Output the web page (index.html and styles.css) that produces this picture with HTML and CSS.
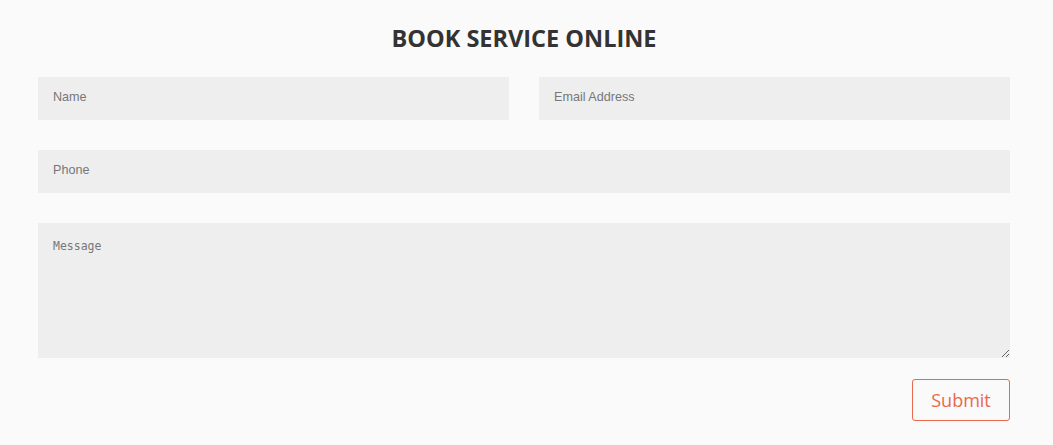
FILE: index.html
```html
<!DOCTYPE html>
<html>
<head>
<meta charset="utf-8">
<link rel="stylesheet" href="styles.css">
</head>
<body>
<section class="booking">
  <h2 class="title">BOOK SERVICE ONLINE</h2>
  <form class="form">
    <div class="row two">
      <input class="field" type="text" placeholder="Name">
      <input class="field" type="email" placeholder="Email Address">
    </div>
    <div class="row">
      <input class="field" type="text" placeholder="Phone">
    </div>
    <div class="row">
      <textarea class="field area" placeholder="Message"></textarea>
    </div>
    <div class="actions">
      <button type="button" class="submit">Submit</button>
    </div>
  </form>
</section>
</body>
</html>
```
FILE: styles.css
```css
html, body {
  margin: 0;
  padding: 0;
  background: #fafafa;
}
.booking {
  width: 972px;
  padding: 23px 0 0 38px;
  font-family: "Open Sans", sans-serif;
}
.title {
  margin: 0 0 24px;
  text-align: center;
  font-size: 23.5px;
  font-weight: 700;
  line-height: 30px;
  color: #333333;
}
.form {
  display: flex;
  flex-direction: column;
  gap: 30px;
}
.row {
  display: flex;
  gap: 30px;
}
.row.two .field {
  flex: 1;
}
.field {
  box-sizing: border-box;
  width: 100%;
  height: 43px;
  border: none;
  background: #eeeeee;
  padding: 0 15px 3px;
  font-family: "Liberation Sans", Arial, sans-serif;
  font-size: 12.6px;
  color: #555;
  outline: none;
}
.field::placeholder {
  color: #777777;
}
.area {
  height: 135px;
  padding: 16px 15px;
  font-family: "DejaVu Sans Mono", monospace;
  font-size: 11.5px;
  resize: vertical;
  display: block;
}
.actions {
  display: flex;
  justify-content: flex-end;
  margin-top: -9px;
}
.submit {
  width: 98px;
  height: 42px;
  background: transparent;
  border: 1px solid #e8694b;
  border-radius: 3px;
  color: #e8694b;
  font-family: "Open Sans", sans-serif;
  font-size: 18px;
  padding: 0;
  cursor: pointer;
}
```
